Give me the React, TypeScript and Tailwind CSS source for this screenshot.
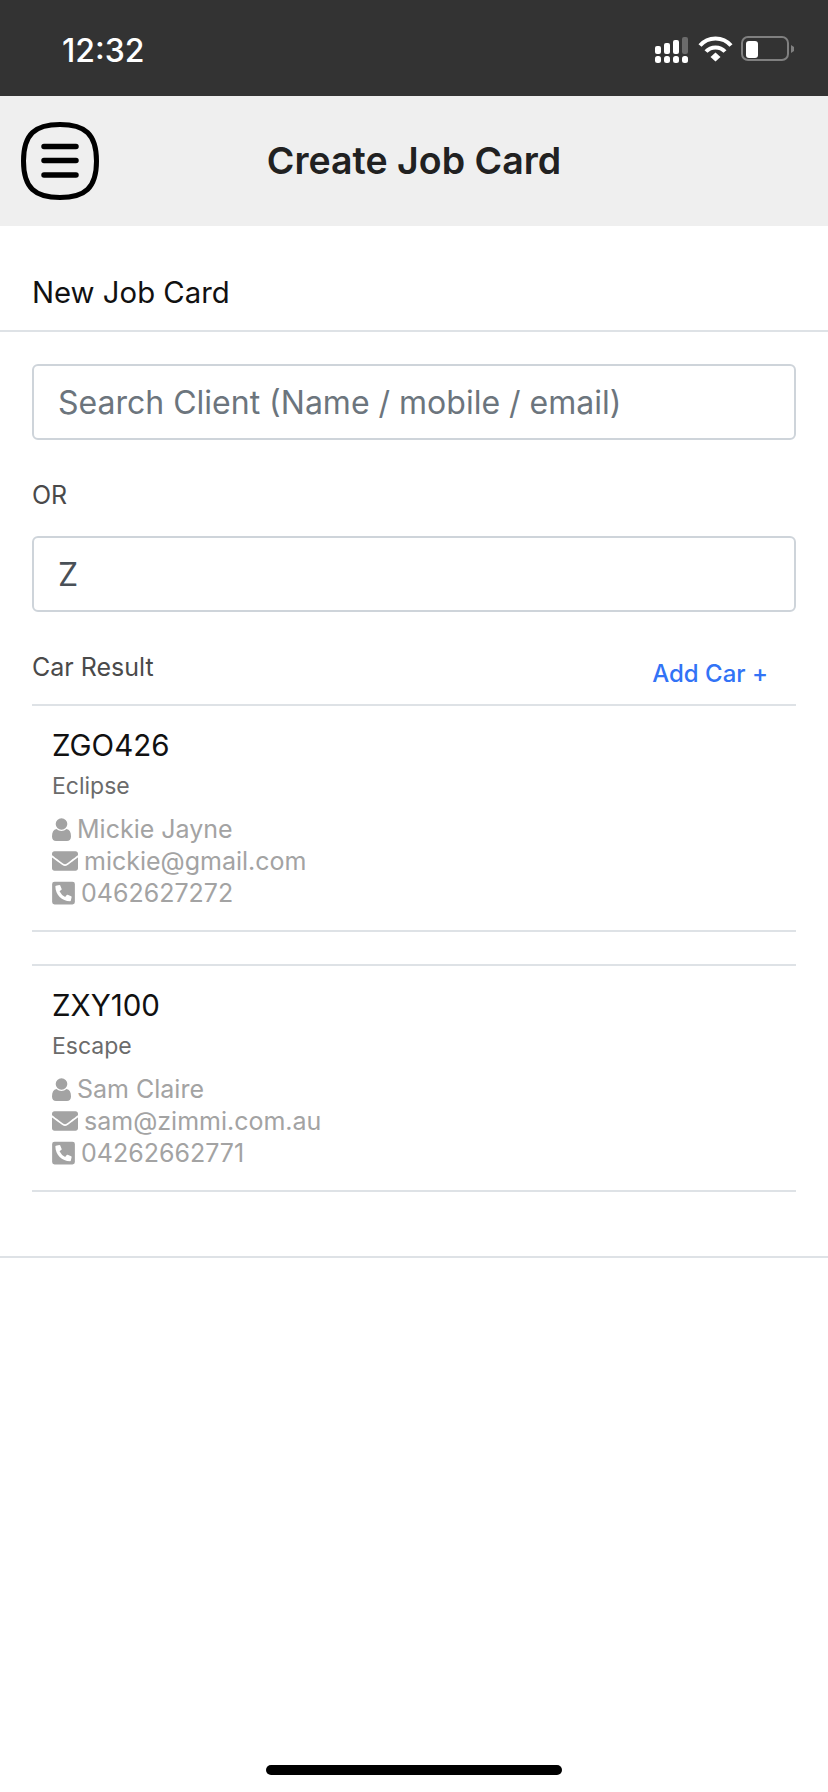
import { FaEnvelope, FaPhoneSquareAlt } from "react-icons/fa";

type Car = {
  plate: string;
  model: string;
  owner: string;
  email: string;
  phone: string;
};

const cars: Car[] = [
  { plate: "ZGO426", model: "Eclipse", owner: "Mickie Jayne", email: "mickie@gmail.com", phone: "0462627272" },
  { plate: "ZXY100", model: "Escape", owner: "Sam Claire", email: "sam@zimmi.com.au", phone: "04262662771" },
];

function StatusBar() {
  return (
    <div className="flex h-[96px] items-center justify-between bg-[#333333] pl-[62px] pr-[31px] pt-[6px]">
      <span className="text-[32px] font-medium leading-none text-white">12:32</span>
      <svg width="142" height="30" viewBox="0 0 142 30" fill="none">
        <g fill="#fff">
          <rect x="0" y="10" width="6" height="8" rx="2" />
          <rect x="9" y="7" width="6" height="11" rx="2" />
          <rect x="18" y="4" width="6" height="14" rx="2" />
          <rect x="0" y="20" width="6" height="7" rx="2.5" />
          <rect x="9" y="20" width="6" height="7" rx="2.5" />
          <rect x="18" y="20" width="6" height="7" rx="2.5" />
          <rect x="27" y="20" width="6" height="7" rx="2.5" />
        </g>
        <rect x="27" y="1" width="6" height="17" rx="2" fill="#6b6b6b" />
        <path d="M45 9.5C53 0 68 0 76 9.5" stroke="#fff" strokeWidth="4" />
        <path d="M51 15.5C56 10 65 10 70 15.5" stroke="#fff" strokeWidth="4" />
        <path d="M55.5 21L60.5 16.5L65.5 21L60.5 25.5Z" fill="#fff" />
        <rect x="87" y="1" width="46" height="23" rx="6" stroke="#808080" strokeWidth="2" />
        <rect x="91" y="5" width="12" height="17" rx="3" fill="#fff" />
        <path d="M136 9L139 11V15L136 17Z" fill="#808080" />
      </svg>
    </div>
  );
}

function MenuIcon() {
  return (
    <svg width="78" height="78" viewBox="0 0 78 78" fill="none" className="shrink-0">
      <path
        d="M39 2.5C64 2.5 75.5 12 75.5 39C75.5 66 64 75.5 39 75.5C14 75.5 2.5 66 2.5 39C2.5 12 14 2.5 39 2.5Z"
        stroke="#000"
        strokeWidth="5"
      />
      <path d="M23 24.5H55M23 38.5H55M23 53H55" stroke="#000" strokeWidth="5.5" strokeLinecap="round" />
    </svg>
  );
}

function UserIcon() {
  return (
    <svg width="19" height="23" viewBox="0 0 19 23" fill="currentColor" className="shrink-0">
      <circle cx="9.5" cy="6" r="5.8" />
      <path d="M0 18.5C0 14 1.5 11.5 4.5 11C6 12.3 7.6 13 9.5 13C11.4 13 13 12.3 14.5 11C17.5 11.5 19 14 19 18.5C19 21.5 17.2 23 15 23H4C1.8 23 0 21.5 0 18.5Z" />
    </svg>
  );
}

function SearchInput({ placeholder, value }: { placeholder: string; value?: string }) {
  return (
    <input
      readOnly
      value={value}
      placeholder={placeholder}
      className="block h-[76px] w-full rounded-[6px] border-2 border-[#ced4da] bg-white px-[24px] text-[32px] text-[#495057] outline-none placeholder:text-[#6c757d]"
    />
  );
}

function CarRow({ car }: { car: Car }) {
  return (
    <div className="h-[226px] border-b-2 border-[#dee2e6] pl-[20px] pt-[20px]">
      <div className="text-[29.5px] leading-[38px] text-[#111111]">{car.plate}</div>
      <div className="mt-[4px] text-[23px] leading-[36px] text-[#6b6b6b]">{car.model}</div>
      <div className="mt-[9px] text-[25px] leading-[32px] text-[#a3a3a3]">
        <div className="flex items-center gap-[6px]">
          <UserIcon />
          <span>{car.owner}</span>
        </div>
        <div className="flex items-center gap-[6px]">
          <FaEnvelope className="h-[26px] w-[26px]" />
          <span>{car.email}</span>
        </div>
        <div className="flex items-center gap-[6px]">
          <FaPhoneSquareAlt className="h-[26px] w-[23px]" />
          <span>{car.phone}</span>
        </div>
      </div>
    </div>
  );
}

export default function App() {
  return (
    <div className="relative flex h-[1792px] w-[828px] flex-col overflow-hidden bg-white font-['Inter',sans-serif]">
      <StatusBar />
      <div className="relative flex h-[130px] items-center bg-[#efefef] pl-[21px]">
        <MenuIcon />
        <h1 className="absolute inset-x-0 text-center text-[37.5px] font-semibold text-[#212121]">Create Job Card</h1>
      </div>

      <div className="flex h-[106px] items-end border-b-2 border-[#dee2e6] px-[32px] pb-[15px] text-[29.3px] leading-[44px] text-[#111111]">
        New Job Card
      </div>

      <div className="border-b-2 border-[#dee2e6] px-[32px] pt-[32px]">
        <SearchInput placeholder="Search Client (Name / mobile / email)" />
        <div className="mt-[39px] mb-[25px] text-[25px] leading-[32px] text-[#4a4a4a]">OR</div>
        <SearchInput placeholder="" value="Z" />

        <div className="mt-[32px] flex h-[62px] items-start justify-between border-b-2 border-[#dee2e6]">
          <span className="mt-[8px] text-[25px] leading-[30px] text-[#4a4a4a]">Car Result</span>
          <span className="mr-[28px] mt-[14px] text-[24px] font-medium leading-[32px] text-[#3273f6]">Add Car +</span>
        </div>

        <div className="flex flex-col gap-[32px] pb-[64px]">
          {cars.map((car) => (
            <div key={car.plate} className="[&:not(:first-child)]:border-t-2 [&:not(:first-child)]:border-[#dee2e6]">
              <CarRow car={car} />
            </div>
          ))}
        </div>
      </div>

      <div className="absolute bottom-[17px] left-[266px] h-[10px] w-[296px] rounded-full bg-black" />
    </div>
  );
}
